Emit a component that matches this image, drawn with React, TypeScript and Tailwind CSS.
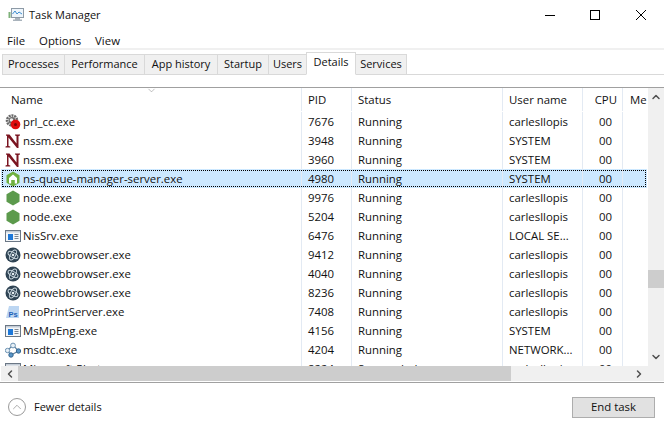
import { ChevronUp, ChevronDown, ChevronLeft, ChevronRight } from "lucide-react";

type IconKind = "gear" | "nssm" | "nodeq" | "node" | "win" | "neo" | "ps" | "dtc";

const rows: { icon: IconKind; name: string; pid: string; status: string; user: string; selected?: boolean }[] = [
  { icon: "gear", name: "prl_cc.exe", pid: "7676", status: "Running", user: "carlesllopis" },
  { icon: "nssm", name: "nssm.exe", pid: "3948", status: "Running", user: "SYSTEM" },
  { icon: "nssm", name: "nssm.exe", pid: "3960", status: "Running", user: "SYSTEM" },
  { icon: "nodeq", name: "ns-queue-manager-server.exe", pid: "4980", status: "Running", user: "SYSTEM", selected: true },
  { icon: "node", name: "node.exe", pid: "9976", status: "Running", user: "carlesllopis" },
  { icon: "node", name: "node.exe", pid: "5204", status: "Running", user: "carlesllopis" },
  { icon: "win", name: "NisSrv.exe", pid: "6476", status: "Running", user: "LOCAL SE..." },
  { icon: "neo", name: "neowebbrowser.exe", pid: "9412", status: "Running", user: "carlesllopis" },
  { icon: "neo", name: "neowebbrowser.exe", pid: "4040", status: "Running", user: "carlesllopis" },
  { icon: "neo", name: "neowebbrowser.exe", pid: "8236", status: "Running", user: "carlesllopis" },
  { icon: "ps", name: "neoPrintServer.exe", pid: "7408", status: "Running", user: "carlesllopis" },
  { icon: "win", name: "MsMpEng.exe", pid: "4156", status: "Running", user: "SYSTEM" },
  { icon: "dtc", name: "msdtc.exe", pid: "4204", status: "Running", user: "NETWORK..." },
  { icon: "win", name: "Microsoft.Photos.exe", pid: "8224", status: "Suspended", user: "carlesllopis" },
];

const tabClass = "h-[21px] -mb-px flex items-center justify-center bg-[#f0f0f0] border border-[#d9d9d9] border-r-0";

function ProcessIcon({ kind }: { kind: IconKind }) {
  if (kind === "gear") {
    return (
      <svg width="16" height="16" viewBox="0 0 16 16">
        <circle cx="7" cy="6.500" r="5" fill="none" stroke="#6a6a6a" strokeWidth="2.500" strokeDasharray="2 0.800" />
        <circle cx="7" cy="6.500" r="3.500" fill="#6a6a6a" />
        <circle cx="6.500" cy="6" r="1.800" fill="#eee" />
        <circle cx="10.500" cy="10.500" r="4.800" fill="#e00c0c" />
        <circle cx="10.500" cy="10.500" r="1.500" fill="#7a0505" />
      </svg>
    );
  }
  if (kind === "nssm") {
    return (
      <svg width="16" height="16" viewBox="0 0 16 16">
        <path d="M1 1.500h3.500l7 9V3L10 2.500v-1h5v1L13.500 3v12H12L3.500 4.500v8.500l1.800.5v1H.5v-1L2 13V3L1 2.500z" fill="#7a1420" />
      </svg>
    );
  }
  if (kind === "node" || kind === "nodeq") {
    return (
      <svg width="16" height="16" viewBox="0 0 16 16">
        <path d="M8 .5l6.500 3.700v7.600L8 15.500l-6.500-3.700V4.200z" fill={kind === "node" ? "#5c9a4c" : "#6fb03f"} />
        {kind === "nodeq" && <path d="M4 12.500V7l4-3.500L12 7v5.500H9.800V9H6.200v3.500z" fill="#fff" />}
      </svg>
    );
  }
  if (kind === "win") {
    return (
      <svg width="16" height="16" viewBox="0 0 16 16">
        <rect x="0.500" y="2.500" width="15" height="11" fill="#f4f6f8" stroke="#6b7785" />
        <rect x="1" y="3" width="14" height="1.500" fill="#c3ccd6" />
        <rect x="3" y="6" width="5" height="6" fill="#1e78d8" />
        <path d="M9.500 6.500h4M9.500 8.500h4M9.500 10.500h4" stroke="#7d8894" />
      </svg>
    );
  }
  if (kind === "neo") {
    return (
      <svg width="16" height="16" viewBox="0 0 16 16" fill="none">
        <circle cx="8" cy="8" r="7.500" fill="#2f4454" />
        <ellipse cx="8" cy="8" rx="5.500" ry="2.500" stroke="#c9d6de" strokeWidth="0.900" transform="rotate(30 8 8)" />
        <ellipse cx="8" cy="8" rx="5.500" ry="2.500" stroke="#c9d6de" strokeWidth="0.900" transform="rotate(-60 8 8)" />
        <circle cx="8" cy="8" r="1.300" fill="#e4ecf0" />
      </svg>
    );
  }
  if (kind === "ps") {
    return (
      <svg width="16" height="16" viewBox="0 0 16 16">
        <path d="M4 2h10v12H1z" fill="#bcd6f2" />
        <text x="3.500" y="12.500" fontSize="7.500" fontWeight="700" fill="#1c62b8" fontFamily="'Liberation Sans', sans-serif">Ps</text>
      </svg>
    );
  }
  return (
    <svg width="16" height="16" viewBox="0 0 16 16" fill="none">
      <path d="M2.500 8.500L8 3l5.500 6L6 13z" stroke="#5e7f9c" strokeWidth="1.200" />
      <circle cx="8" cy="3.500" r="2.400" fill="#e8f0f6" stroke="#6d93b3" />
      <circle cx="2.500" cy="8.500" r="2.200" fill="#e8f0f6" stroke="#6d93b3" />
      <circle cx="13.500" cy="9" r="2.200" fill="#5a96c8" stroke="#33658f" />
      <circle cx="6" cy="13" r="2.200" fill="#5a96c8" stroke="#33658f" />
    </svg>
  );
}

function TaskManagerGlyph() {
  return (
    <svg width="16" height="16" viewBox="0 0 16 16" fill="none">
      <rect x="3.500" y="1.500" width="12" height="9" fill="#eef5fb" stroke="#8d9aa6" />
      <path d="M4.500 7l2.500-3 2 3 2-2 3 2" stroke="#3f8fd0" />
      <path d="M7 11h5v1.500H14V14H5v-1.500h2z" fill="#a9b3bc" />
      <rect x="0.500" y="5" width="2" height="6" fill="#7fb27a" />
    </svg>
  );
}

export default function App() {
  return (
    <div className="w-[664px] h-[431px] bg-white overflow-hidden flex flex-col text-[11.4px] text-[#111] font-['Open_Sans','Noto_Sans',sans-serif]">
      {/* title bar */}
      <div className="h-[30px] flex items-center shrink-0">
        <div className="ml-2 mr-[5px] flex"><TaskManagerGlyph /></div>
        <span className="flex-1 text-[11px]">Task Manager</span>
        <svg className="mr-[35px]" width="10" height="10" viewBox="0 0 10 10" stroke="#000"><path d="M0 5.500h10" /></svg>
        <svg className="mr-[36px]" width="10" height="10" viewBox="0 0 10 10" fill="none" stroke="#000"><rect x="0.500" y="0.500" width="9" height="9" /></svg>
        <svg className="mr-[18px]" width="10" height="10" viewBox="0 0 10 10" stroke="#000"><path d="M0 0l10 10M10 0L0 10" /></svg>
      </div>

      {/* menu */}
      <div className="h-[18px] pt-[3px] flex items-center gap-[14px] pl-[7px] shrink-0">
        <span>File</span>
        <span>Options</span>
        <span>View</span>
      </div>

      {/* tabs */}
      <div className="h-[27px] border-t-2 border-[#f0f0f0] flex items-end pl-[2px] shrink-0 text-[11px]">
        <div className="flex items-end h-[25px] w-full border-b border-[#d9d9d9]">
          <div className={`${tabClass} w-[62px]`}>Processes</div>
          <div className={`${tabClass} w-[80px]`}>Performance</div>
          <div className={`${tabClass} w-[73px]`}>App history</div>
          <div className={`${tabClass} w-[51px]`}>Startup</div>
          <div className={`${tabClass} w-[38px]`}>Users</div>
          <div className="w-[50px] h-[23px] -mb-px pb-[2px] flex items-center justify-center bg-white border border-[#d9d9d9] border-b-white">
            Details
          </div>
          <div className="w-[51px] h-[21px] -mb-px flex items-center justify-center bg-[#f0f0f0] border border-[#d9d9d9] border-l-0">
            Services
          </div>
        </div>
      </div>

      {/* table */}
      <div className="mt-[12px] flex-1 min-h-0 flex flex-col border-t border-[#a0a0a0] border-b border-b-[#a0a0a0]">
        <div className="flex flex-1 min-h-0">
          <div className="flex-1 min-w-0 overflow-hidden">
            <div className="relative h-[24px] flex items-center pb-px">
              <ChevronDown className="absolute left-[146px] -top-[3px] w-[11px] h-[11px] text-[#8a8a8a]" strokeWidth={1.2} />
              <div className="w-[302px] pl-[11px] border-r border-[#e3eaf3] h-full flex items-center">Name</div>
              <div className="w-[50px] pl-[6px] border-r border-[#e3eaf3] h-full flex items-center">PID</div>
              <div className="w-[151px] pl-[6px] border-r border-[#e3eaf3] h-full flex items-center">Status</div>
              <div className="w-[80px] pl-[6px] border-r border-[#e3eaf3] h-full flex items-center">User name</div>
              <div className="w-[40px] pr-[5px] border-r border-[#e3eaf3] h-full flex items-center justify-end">CPU</div>
              <div className="w-[24px] pl-[7px] h-full flex items-center overflow-hidden">Me</div>
            </div>
            {rows.map((r) => (
              <div
                key={r.pid}
                className={
                  r.selected
                    ? "h-[19px] ml-px mr-px flex items-center bg-[#cce8ff] outline-1 outline-dotted -outline-offset-2 outline-black"
                    : "h-[19px] ml-px mr-px flex items-center"
                }
              >
                <div className="w-[301px] h-full pl-[4px] flex items-center gap-[2px] border-r border-[#e3eaf3] whitespace-nowrap overflow-hidden">
                  <ProcessIcon kind={r.icon} />
                  {r.name}
                </div>
                <div className="w-[50px] h-full pl-[6px] flex items-center border-r border-[#e3eaf3]">{r.pid}</div>
                <div className="w-[151px] h-full pl-[6px] flex items-center border-r border-[#e3eaf3]">{r.status}</div>
                <div className="w-[80px] h-full pl-[6px] flex items-center border-r border-[#e3eaf3] whitespace-nowrap overflow-hidden">{r.user}</div>
                <div className="w-[40px] h-full pr-[10px] flex items-center justify-end border-r border-[#e3eaf3]">00</div>
                <div className="w-[22px] h-full" />
              </div>
            ))}
          </div>

          {/* vertical scrollbar */}
          <div className="w-[16px] shrink-0 bg-[#f0f0f0] flex flex-col items-center text-[#505050]">
            <ChevronUp className="w-[12px] h-[12px] mt-[3px]" strokeWidth={3} />
            <div className="w-full h-[18px] bg-[#cdcdcd] mt-[167px]" />
            <ChevronDown className="w-[12px] h-[12px] mt-auto mb-[3px]" strokeWidth={3} />
          </div>
        </div>

        {/* horizontal scrollbar */}
        <div className="h-[15px] mb-px ml-px shrink-0 bg-[#f0f0f0] flex items-center text-[#505050]">
          <ChevronLeft className="w-[12px] h-[12px] ml-[3px] mr-[2px]" strokeWidth={3} />
          <div className="w-[493px] h-full bg-[#cdcdcd]" />
          <ChevronRight className="w-[12px] h-[12px] ml-auto mr-[19px]" strokeWidth={3} />
        </div>
      </div>

      {/* footer */}
      <div className="h-[48px] shrink-0 flex items-center pl-[8px] pr-[9px]">
        <div className="w-[18px] h-[18px] rounded-full border border-[#9a9a9a] flex items-center justify-center mr-[8px]">
          <ChevronUp className="w-[14px] h-[14px] text-[#8a8a8a]" strokeWidth={1.2} />
        </div>
        <span className="flex-1 text-[11px]">Fewer details</span>
        <div className="w-[83px] h-[21px] bg-[#e1e1e1] border border-[#adadad] flex items-center justify-center">End task</div>
      </div>
    </div>
  );
}
